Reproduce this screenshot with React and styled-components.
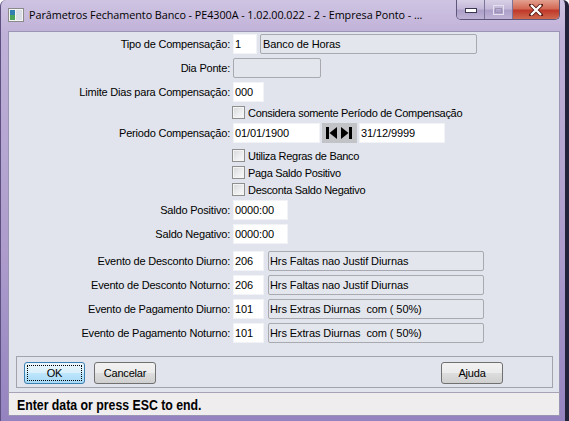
import React from "react";
import styled, { createGlobalStyle } from "styled-components";

const GlobalStyle = createGlobalStyle`
  html, body {
    margin: 0;
    padding: 0;
    background: #ffffff;
  }
  body {
    font-family: "Liberation Sans", Arial, sans-serif;
    font-size: 11px;
    color: #000;
  }
`;

const Window = styled.div`
  width: 569px;
  height: 421px;
  box-sizing: border-box;
  display: flex;
  flex-direction: column;
  padding: 0 5px 5px 7px;
  border-left: 1px solid #5d5080;
  border-right: 4px solid #22223a;
  border-radius: 6px 6px 0 0;
  background: linear-gradient(180deg, #cfc4e2 0%, #bfb1d8 8%, #ad9ccc 60%, #9483bf 100%);
`;

const TitleBar = styled.div`
  height: 31px;
  display: flex;
  align-items: flex-start;
  flex-shrink: 0;
`;

const AppIcon = styled.svg`
  margin-top: 8px;
  flex-shrink: 0;
`;

const Title = styled.div`
  margin: 7px 0 0 5px;
  font-family: "Open Sans", "Noto Sans", sans-serif;
  font-size: 10.8px;
  letter-spacing: -0.05px;
  color: #000;
  white-space: nowrap;
`;

const CaptionGroup = styled.div`
  margin-left: auto;
  display: flex;
  height: 19px;
  border: 1px solid #5f577a;
  border-top: none;
  border-radius: 0 0 5px 5px;
  overflow: hidden;
`;

const CaptionBtn = styled.div`
  width: ${({ $w }) => $w}px;
  display: flex;
  align-items: center;
  justify-content: center;
  border-left: ${({ $first }) => ($first ? "none" : "1px solid #7d7499")};
  background: ${({ $close }) =>
    $close
      ? "linear-gradient(180deg, #e3a08f 0%, #d36a55 45%, #c0392a 55%, #cf6a4f 100%)"
      : "linear-gradient(180deg, #d8d0e6 0%, #c4b9d9 45%, #ad9fc8 55%, #beb3d6 100%)"};
`;

const Client = styled.div`
  flex: 1;
  display: flex;
  flex-direction: column;
  background: #e1e4ec;
  border: 1px solid #9a95b4;
  border-bottom: none;
`;

const Form = styled.div`
  display: flex;
  flex-direction: column;
`;

const Row = styled.div`
  display: flex;
  align-items: center;
  height: 24px;
  margin-top: ${({ $mt }) => $mt || 0}px;
  gap: ${({ $gap }) => ($gap == null ? 2 : $gap)}px;
`;

const Label = styled.div`
  width: 221px;
  text-align: right;
  letter-spacing: -0.2px;
  white-space: nowrap;
  flex-shrink: 0;
`;

const Input = styled.div`
  width: ${({ $w }) => $w}px;
  height: 20px;
  box-sizing: border-box;
  display: flex;
  align-items: center;
  padding-left: 1px;
  background: #ffffff;
  border: 1px solid #f2f3f6;
  letter-spacing: -0.1px;
  white-space: pre;
  margin-left: ${({ $ml }) => $ml || 0}px;
`;

const ReadBox = styled(Input)`
  padding-left: ${({ $pl }) => ($pl == null ? 1 : $pl)}px;
  background: #e4e6ed;
  border: 1px solid #a9aab0;
  border-radius: 2px;
`;

const SpinBtn = styled.div`
  width: 35px;
  height: 20px;
  display: flex;
  align-items: center;
  justify-content: center;
  background: #c2c3c7;
`;

const CheckRow = styled.div`
  display: flex;
  align-items: center;
  height: 17px;
  margin-left: 223px;
  margin-top: ${({ $mt }) => $mt || 0}px;
  gap: 3px;
  letter-spacing: -0.3px;
`;

const CheckBox = styled.div`
  width: 13px;
  height: 13px;
  box-sizing: border-box;
  border: 1px solid #8e8f8f;
  background: linear-gradient(135deg, #d6d7d9 0%, #eeeff0 60%, #fafafa 100%);
  box-shadow: inset 0 0 0 1px #f4f4f4;
`;

const ButtonPanel = styled.div`
  margin: auto 6px 4px 7px;
  height: 32px;
  box-sizing: border-box;
  border: 1px solid #a3a3ab;
  display: flex;
  align-items: center;
  gap: 9px;
  padding: 1px 49px 0 7px;
`;

const Button = styled.div`
  width: ${({ $w }) => $w || 62}px;
  height: 22px;
  box-sizing: border-box;
  display: flex;
  align-items: center;
  justify-content: center;
  border-radius: 3px;
  position: relative;
  margin-left: ${({ $push }) => ($push ? "auto" : "0")};
  border: 1px solid ${({ $focus }) => ($focus ? "#3c7fb1" : "#707070")};
  background: ${({ $focus }) =>
    $focus
      ? "linear-gradient(180deg, #eaf6fd 0%, #d9f0fc 50%, #bee6fd 51%, #a7d9f5 100%)"
      : "linear-gradient(180deg, #f2f2f2 0%, #ebebeb 50%, #dddddd 51%, #cfcfcf 100%)"};
  letter-spacing: -0.2px;
`;

const FocusRing = styled.div`
  position: absolute;
  inset: 2px;
  border: 1px dotted #000;
`;

const StatusBar = styled.div`
  height: 24px;
  box-sizing: border-box;
  flex-shrink: 0;
  display: flex;
  align-items: center;
  padding: 1px 0 0 8px;
  background: #efedee;
  border: 1px solid #9a95b4;
  border-top: 1px solid #a6a3b6;
`;

const StatusText = styled.span`
  display: inline-block;
  font-family: "Liberation Sans", Arial, sans-serif;
  font-weight: bold;
  font-size: 15px;
  white-space: nowrap;
  transform: scaleX(0.82);
  transform-origin: left center;
`;

const checks = ["Utiliza Regras de Banco", "Paga Saldo Positivo", "Desconta Saldo Negativo"];

const events = [
  ["Evento de Desconto Diurno:", "206", "Hrs Faltas nao Justif Diurnas"],
  ["Evento de Desconto Noturno:", "206", "Hrs Faltas nao Justif Diurnas"],
  ["Evento de Pagamento Diurno:", "101", "Hrs Extras Diurnas  com ( 50%)"],
  ["Evento de Pagamento Noturno:", "101", "Hrs Extras Diurnas  com ( 50%)"],
];

export default function App() {
  return (
    <>
      <GlobalStyle />
      <Window>
        <TitleBar>
          <AppIcon width="16" height="14" viewBox="0 0 16 14">
            <rect x="0.5" y="0.5" width="15" height="13" fill="#f4f4f4" stroke="#8a8a8a" />
            <rect x="2" y="2" width="5" height="10" fill="#2f7fb0" />
            <rect x="2" y="7" width="5" height="5" fill="#4aa35a" />
            <rect x="8" y="2" width="6" height="10" fill="#d8dde6" />
          </AppIcon>
          <Title>Parâmetros Fechamento Banco - PE4300A - 1.02.00.022 - 2 - Empresa Ponto - ...</Title>
          <CaptionGroup>
            <CaptionBtn $w={27} $first>
              <svg width="12" height="6" viewBox="0 0 12 6">
                <rect x="0.5" y="1.5" width="11" height="4" fill="#fff" stroke="#3a3550" />
              </svg>
            </CaptionBtn>
            <CaptionBtn $w={27}>
              <svg width="11" height="10" viewBox="0 0 11 10">
                <rect x="0.5" y="0.5" width="10" height="9" fill="none" stroke="#e6e1ef" />
                <rect x="2.5" y="3.5" width="6" height="4" fill="none" stroke="#9b92b4" />
              </svg>
            </CaptionBtn>
            <CaptionBtn $w={46} $close>
              <svg width="14" height="12" viewBox="0 0 14 12">
                <path d="M2 1 L12 11 M12 1 L2 11" stroke="#5a1a12" strokeWidth="4" strokeLinecap="square" />
                <path d="M2 1 L12 11 M12 1 L2 11" stroke="#ffffff" strokeWidth="2.4" />
              </svg>
            </CaptionBtn>
          </CaptionGroup>
        </TitleBar>

        <Client>
          <Form>
            <Row>
              <Label>Tipo de Compensação:</Label>
              <Input $w={24} $ml={1}>1</Input>
              <ReadBox $w={217} $ml={1} $pl={2}>Banco de Horas</ReadBox>
            </Row>
            <Row>
              <Label>Dia Ponte:</Label>
              <ReadBox $w={88} $ml={1} />
            </Row>
            <Row>
              <Label>Limite Dias para Compensação:</Label>
              <Input $w={31} $ml={1}>000</Input>
            </Row>
            <CheckRow>
              <CheckBox />
              <span>Considera somente Período de Compensação</span>
            </CheckRow>
            <Row>
              <Label>Periodo Compensação:</Label>
              <Input $w={87} $ml={1}>01/01/1900</Input>
              <SpinBtn>
                <svg width="27" height="12" viewBox="0 0 27 12">
                  <rect x="0" y="0" width="3" height="12" fill="#000" />
                  <path d="M11 0 L3.5 6 L11 12 Z" fill="#000" />
                  <path d="M15 0 L22.5 6 L15 12 Z" fill="#000" />
                  <rect x="23" y="0" width="3" height="12" fill="#000" />
                </svg>
              </SpinBtn>
              <Input $w={86}>31/12/9999</Input>
            </Row>
            {checks.map((c, i) => (
              <CheckRow key={c} $mt={i === 0 ? 2 : 0}>
                <CheckBox />
                <span>{c}</span>
              </CheckRow>
            ))}
            <Row>
              <Label>Saldo Positivo:</Label>
              <Input $w={55} $ml={1}>0000:00</Input>
            </Row>
            <Row>
              <Label>Saldo Negativo:</Label>
              <Input $w={55} $ml={1}>0000:00</Input>
            </Row>
            {events.map(([label, code, desc], i) => (
              <Row key={label} $mt={i === 0 ? 3 : 0} $gap={4}>
                <Label>{label}</Label>
                <Input $w={31} $ml={-1}>{code}</Input>
                <ReadBox $w={216}>{desc}</ReadBox>
              </Row>
            ))}
          </Form>

          <ButtonPanel>
            <Button $w={61} $focus>
              <FocusRing />
              OK
            </Button>
            <Button $w={62}>Cancelar</Button>
            <Button $w={62} $push>Ajuda</Button>
          </ButtonPanel>
        </Client>

        <StatusBar>
          <StatusText>Enter data or press ESC to end.</StatusText>
        </StatusBar>
      </Window>
    </>
  );
}
